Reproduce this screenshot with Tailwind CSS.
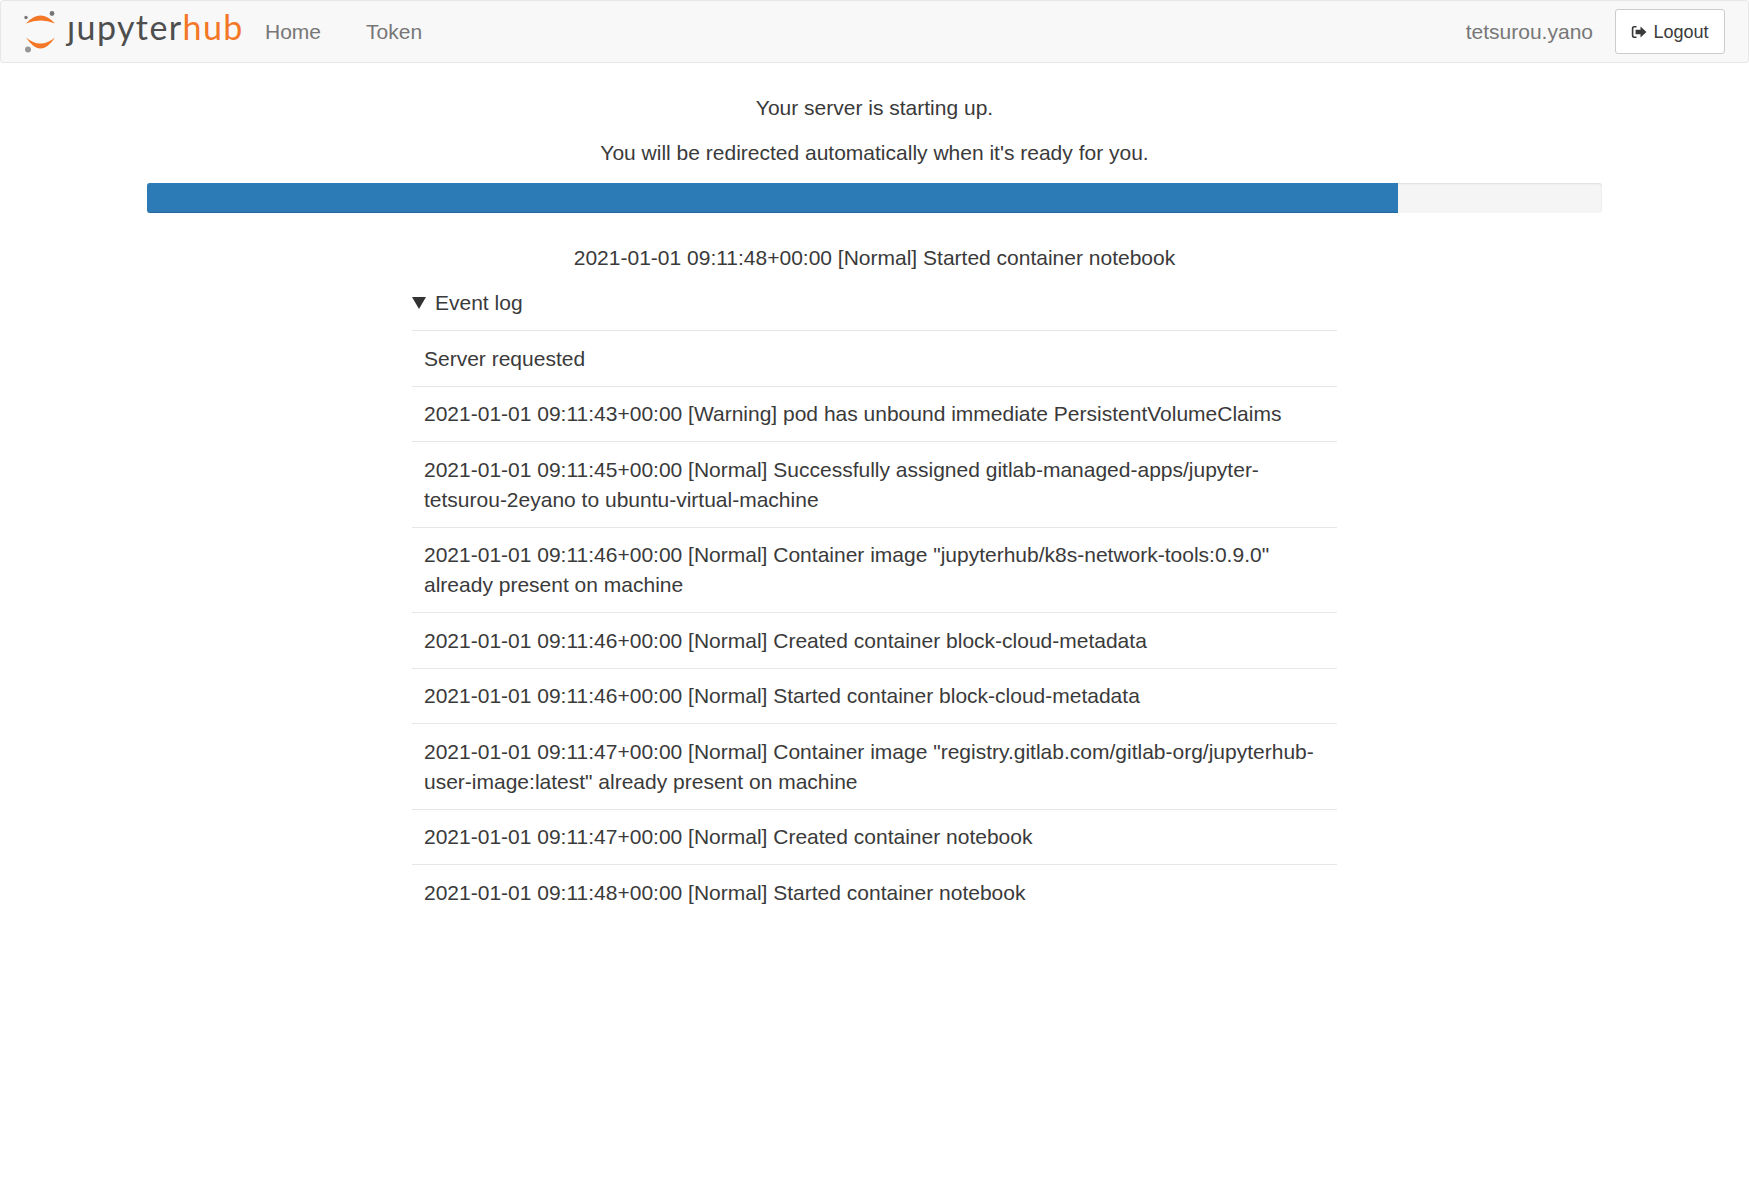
<!DOCTYPE html>
<html lang="en">
<head>
    <meta charset="UTF-8">
    <meta name="viewport" content="width=device-width, initial-scale=1.0">
    <title>JupyterHub</title>
    <script src="https://cdn.jsdelivr.net/npm/@tailwindcss/browser@4"></script>
</head>
<body class="bg-white text-[#3a3a3a] text-[21px] leading-[30px] font-['Liberation_Sans',Arial,sans-serif]">
    <!-- Navbar -->
    <nav class="h-[63px] flex items-center bg-[#f8f8f8] border border-[#e7e7e7] rounded-[3px] pl-[22px] pr-[23px]">
        <a class="flex items-center w-[220px] h-[46px] shrink-0">
            <svg class="w-[36px] h-[44px] shrink-0" viewBox="0 0 36 44">
                <path d="M3 13.500 Q17.500 -2.500 32 13.500 Q17.500 7.500 3 13.500Z" fill="#f37726"/>
                <path d="M3 27.500 Q17.500 49.500 32 27.500 Q17.500 39.500 3 27.500Z" fill="#f37726"/>
                <circle cx="29" cy="3.500" r="2.400" fill="#767677"/>
                <circle cx="3" cy="7.500" r="1.700" fill="#767677"/>
                <circle cx="5" cy="39.500" r="3" fill="#989798"/>
            </svg>
            <span class="ml-[8px] mt-[-10px] font-['Lato',sans-serif] text-[34px] leading-[46px] tracking-[1.4px] text-[#4e4e4e] whitespace-nowrap">ȷupyter<span class="text-[#f37726]">hub</span></span>
        </a>
        <div class="flex text-[#777]">
            <a class="pl-[22px] pr-[23px]">Home</a>
            <a class="px-[22px]">Token</a>
        </div>
        <span class="ml-auto text-[#777] mr-[22px]">tetsurou.yano</span>
        <button class="flex items-center justify-center w-[110px] h-[45px] bg-white border border-[#ccc] rounded-[3px] text-[18px] text-[#3a3a3a]">
            <svg class="w-[16px] h-[14px] mr-[6px]" viewBox="0 0 16 14" fill="#3a3a3a">
                <path d="M5.500 1H3C1.600 1 .8 2 .8 3.200v7.600C.8 12 1.600 13 3 13h2.500v-1.600H3.200c-.5 0-.8-.3-.8-.8V3.400c0-.5.3-.8.8-.8h2.300z"/>
                <path d="M9.500 1.600 15.400 7l-5.900 5.400V9.200H4.600V4.800h4.900z"/>
            </svg>
            Logout
        </button>
    </nav>

    <main class="w-[1455px] mx-auto">
        <div class="pt-[30px] text-center">
            <p>Your server is starting up.</p>
            <p class="mt-[15px]">You will be redirected automatically when it's ready for you.</p>
        </div>
        <!-- Progress -->
        <div class="mt-[15px] h-[30px] bg-[#f5f5f5] rounded-[3px] overflow-hidden shadow-[inset_0_1px_2px_rgba(0,0,0,0.1)]">
            <div class="h-full w-[1251px] bg-[#2c7ab6] shadow-[inset_0_-1px_0_rgba(0,0,0,0.15)]"></div>
        </div>
        <p class="mt-[30px] text-center">2021-01-01 09:11:48+00:00 [Normal] Started container notebook</p>

        <!-- Event log -->
        <div class="w-[925px] mx-auto mt-[15px]">
            <div class="flex items-center h-[30px]">
                <svg class="w-[14px] h-[12px] mr-[9px]" viewBox="0 0 14 12" fill="#333"><path d="M0 0h14L7 12z"/></svg>
                <span>Event log</span>
            </div>
            <ul class="mt-[12px] border-t border-[#e7e7e7]">
                <li class="px-[12px] pt-[12.750px] pb-[11.750px] border-b border-[#e7e7e7]">Server requested</li>
                <li class="px-[12px] pt-[12.750px] pb-[11.750px] border-b border-[#e7e7e7]">2021-01-01 09:11:43+00:00 [Warning] pod has unbound immediate PersistentVolumeClaims</li>
                <li class="px-[12px] pt-[12.750px] pb-[11.750px] border-b border-[#e7e7e7]">2021-01-01 09:11:45+00:00 [Normal] Successfully assigned gitlab-managed-apps/jupyter-tetsurou-2eyano to ubuntu-virtual-machine</li>
                <li class="px-[12px] pt-[12.750px] pb-[11.750px] border-b border-[#e7e7e7]">2021-01-01 09:11:46+00:00 [Normal] Container image "jupyterhub/k8s-network-tools:0.9.0" already present on machine</li>
                <li class="px-[12px] pt-[12.750px] pb-[11.750px] border-b border-[#e7e7e7]">2021-01-01 09:11:46+00:00 [Normal] Created container block-cloud-metadata</li>
                <li class="px-[12px] pt-[12.750px] pb-[11.750px] border-b border-[#e7e7e7]">2021-01-01 09:11:46+00:00 [Normal] Started container block-cloud-metadata</li>
                <li class="px-[12px] pt-[12.750px] pb-[11.750px] border-b border-[#e7e7e7]">2021-01-01 09:11:47+00:00 [Normal] Container image "registry.gitlab.com/gitlab-org/jupyterhub-user-image:latest" already present on machine</li>
                <li class="px-[12px] pt-[12.750px] pb-[11.750px] border-b border-[#e7e7e7]">2021-01-01 09:11:47+00:00 [Normal] Created container notebook</li>
                <li class="px-[12px] pt-[12.750px] pb-[11.750px]">2021-01-01 09:11:48+00:00 [Normal] Started container notebook</li>
            </ul>
        </div>
    </main>
</body>
</html>
